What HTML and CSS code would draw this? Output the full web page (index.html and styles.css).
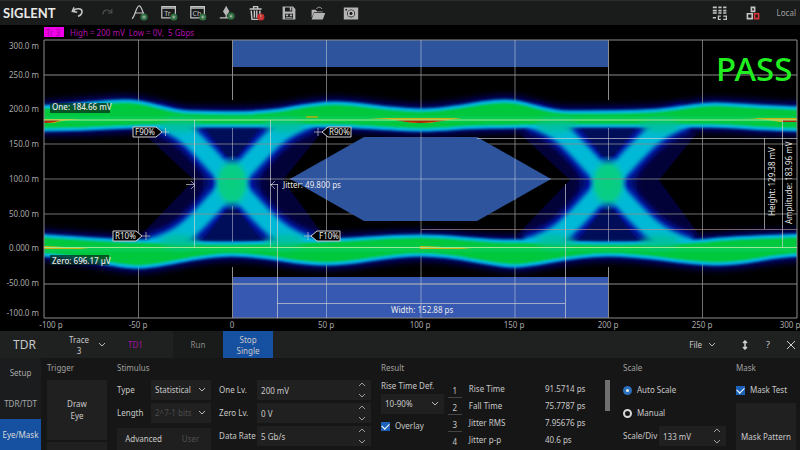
FILE: index.html
```
<!DOCTYPE html>
<html lang="en">

<head>
    <meta charset="utf-8">
    <title>SIGLENT TDR eye diagram</title>
    <link rel="stylesheet" href="styles.css">
</head>

<body>

    <header class="toolbar">
        <span class="brand">SIGLENT</span>
        <div class="tools">
            <button class="tool" aria-label="Undo">
                <svg viewBox="0 0 20 20"><path d="M5 3L3 8l6 1M4 8c3-5 11-4 11 0 0 3-2 5-5 6" stroke-width="2"/></svg>
            </button>
            <button class="tool dim" aria-label="Redo">
                <svg viewBox="0 0 20 20"><path d="M16 5v5h-5M15 9c-3-4-10-4-10 3" stroke-width="1.5"/></svg>
            </button>
            <button class="tool split" aria-label="Add marker">
                <svg viewBox="0 0 20 20"><path d="M0 17C4 15 5 1 9 1s4 13 9 14M3 10h12" stroke-width="1.5"/><circle class="plus" cx="15" cy="15" r="4.5"/><path d="M15 13v4M13 15h4" stroke-width="1"/></svg>
            </button>
            <button class="tool" aria-label="Add trace">
                <svg viewBox="0 0 20 20"><path d="M1 2h17v14H1zM1 4h17" stroke-width="1.5"/><text x="4" y="14">Tr</text><circle class="plus" cx="16" cy="15" r="4.5"/><path d="M16 13v4M14 15h4" stroke-width="1"/></svg>
            </button>
            <button class="tool" aria-label="Add channel">
                <svg viewBox="0 0 20 20"><path d="M1 2h17v14H1zM1 4h17" stroke-width="1.5"/><text x="3" y="14">Ch</text><circle class="plus" cx="16" cy="15" r="4.5"/><path d="M16 13v4M14 15h4" stroke-width="1"/></svg>
            </button>
            <button class="tool" aria-label="Add point">
                <svg viewBox="0 0 20 20"><path class="solid" d="M9 1l4 7-4 6-4-6z"/><path d="M1 16h11M9 13v3" stroke-width="1.5"/><circle class="plus" cx="15" cy="14" r="4.5"/><path d="M15 12v4M13 14h4" stroke-width="1"/></svg>
            </button>
            <button class="tool" aria-label="Delete">
                <svg viewBox="0 0 20 20"><path d="M2 5h15M7 4V2h5v2M4 7l1 11h9l1-11M8 7v9M11 7v9" stroke-width="1.8"/><circle class="alert" cx="16" cy="15" r="4.5"/><path d="M16 12v3M16 16v1" stroke-width="1"/></svg>
            </button>
            <button class="tool split" aria-label="Save">
                <svg viewBox="0 0 20 20"><path class="solid" fill-rule="evenodd" d="M2 2h13l3 3v13H2zM5 3v5h9V3zM5 11v6h10v-6zM11 3h2v4h-2zM6 12h3v2H6zM11 12h3v2h-3zM6 15h8v1H6z"/></svg>
            </button>
            <button class="tool" aria-label="Open">
                <svg viewBox="0 0 20 20"><path class="solid" d="M2 6h5l2 2h7v1H5l-3 7zM5 10h14l-3 8H2z"/><path d="M8 5c2-3 5-3 7 0" stroke-width="1"/></svg>
            </button>
            <button class="tool split" aria-label="Screenshot">
                <svg viewBox="0 0 20 20"><path class="solid" fill-rule="evenodd" d="M1 3h18v15H1zM10 5.500a5 5 0 1 0 .1 0zM3 5h2v2H3z"/><circle cx="10" cy="10.500" r="3" stroke-width="2"/></svg>
            </button>
        </div>
        <div class="status">
            <button class="tool" aria-label="Keyboard">
                <svg viewBox="0 0 20 20"><path d="M1 3h5M8 3h4M14 3h4M1 7h5M8 7h4M14 7h4M1 10h5M8 10h4M14 10h4M1 16h4" stroke-width="2"/><path d="M11 14H8v4h3M14 14h4v4h-4" stroke-width="1.500"/></svg>
            </button>
            <button class="tool" aria-label="Network">
                <svg viewBox="0 0 20 20"><path d="M8 3h4v5H8zM3 11h6v6H3z" stroke-width="2"/><path class="red" d="M12 11h5v6h-5z" stroke-width="2"/></svg>
            </button>
            <span class="local">Local</span>
        </div>
    </header>

    <main>
        <svg class="chart" viewBox="0 25 800 306" role="img" aria-label="Eye diagram">
            <defs>
                <filter id="soft" x="-20%" y="-20%" width="140%" height="140%"><feGaussianBlur stdDeviation="3"/></filter>
                <filter id="glow" x="-20%" y="-40%" width="140%" height="180%"><feGaussianBlur stdDeviation="4"/></filter>
                <filter id="edge" x="-5%" y="-20%" width="110%" height="140%"><feGaussianBlur stdDeviation="1"/></filter>
                <filter id="beam" x="-20%" y="-20%" width="140%" height="140%"><feGaussianBlur stdDeviation="2"/></filter>
                <clipPath id="plot"><path d="M44 40H797V318H44z"/></clipPath>
                <radialGradient id="core"><stop offset="0" stop-color="#08cf7c"/><stop offset=".6" stop-color="#08cc8a"/><stop offset="1" stop-color="#00bfd0" stop-opacity="0"/></radialGradient>

                <path id="one" d="M34 107C60 107 100 101 125 101S165 111 190 112S250 113 270 111S310 103 335 103S390 110 421 110S480 101 505 101S540 112 570 112S640 112 660 110S700 104 715 104S770 108 806 108V130C760 130 740 126 710 126S670 126 660 126H560C530 126 520 127 490 127S450 130 421 130S360 126 330 126H165C120 126 110 130 34 130z"/>
                <path id="zero" d="M34 235C80 238 110 241 138 241S200 243 232 243S300 241 330 240S390 236 421 236S480 241 515 241S570 243 608 243S690 242 710 240S780 236 806 235V255C770 255 750 264 717 264S650 255 608 255S540 266 515 266S460 255 421 255S360 264 326 264S270 255 232 255S165 267 138 267S80 255 34 255z"/>
                <path id="arms" d="M154 118C184 126 196 142 232 183S280 238 314 248M150 248C184 240 196 224 232 183S280 128 310 118"/>

                <g id="crossing">
                    <path fill="#030238" d="M142 132H322L283 180L324 236H140L194 180z"/>
                    <path fill="#000d62" filter="url(#soft)" d="M172 126H294C280 148 264 158 261 183S280 228 298 244H168C188 228 203 208 203 183S190 148 172 126z"/>
                    <use href="#arms" fill="none" stroke="#0018b4" stroke-width="29" filter="url(#soft)"/>
                    <use href="#arms" fill="none" stroke="#00b9d6" stroke-width="19" filter="url(#beam)"/>
                    <path fill="#000b58" filter="url(#edge)" d="M207 130H258L239 154Q232 162 225 154zM204 240H260L239 212Q232 204 225 212z"/>
                    <ellipse cx="232" cy="183" rx="20" ry="28" fill="url(#core)"/>
                </g>
            </defs>

            <rect class="badge" x="44" y="27" width="20" height="10"/>
            <text class="badge-text" x="46" y="36">Tr 3</text>
            <text class="info" x="70" y="36">High = 200 mV&#160; Low = 0V,&#160; 5 Gbps</text>

            <!-- density map of the trace -->
            <g clip-path="url(#plot)">
                <g fill="#0015a5" stroke="#0010a0" stroke-width="8" filter="url(#glow)">
                    <use href="#one"/>
                    <use href="#zero"/>
                </g>
                <use href="#crossing"/>
                <use href="#crossing" x="376"/>
                <path class="grid under" d="M44 144H797M44 179H797M44 214H797M138.500 40V318M326.500 40V318M421 40V318M515 40V318M702.500 40V318"/>
                <g fill="#06c83c" stroke="#00b8e8" stroke-width="3" filter="url(#edge)">
                    <use href="#one"/>
                    <use href="#zero"/>
                </g>
                <g fill="none" stroke="#08cf66" stroke-width="5" opacity=".6" filter="url(#edge)">
                    <path d="M44 119H797M44 249H797"/>
                </g>
                <g fill="#04c28c" opacity=".75" filter="url(#soft)">
                    <ellipse cx="180" cy="125" rx="20" ry="7"/>
                    <ellipse cx="284" cy="125" rx="20" ry="7"/>
                    <ellipse cx="180" cy="242" rx="20" ry="7"/>
                    <ellipse cx="284" cy="242" rx="20" ry="7"/>
                    <ellipse cx="556" cy="125" rx="20" ry="7"/>
                    <ellipse cx="660" cy="125" rx="20" ry="7"/>
                    <ellipse cx="556" cy="242" rx="20" ry="7"/>
                    <ellipse cx="660" cy="242" rx="20" ry="7"/>
                </g>
                <path fill="#c8b414" d="M44 119H82Q62 120 54 123H44zM368 118H462Q440 121 430 123H412Q396 119 368 118zM740 118H797V122H780Q760 118 740 118zM44 246Q70 247 90 249H44zM420 246Q450 247 472 249H420z"/>
                <path fill="#8cb420" d="M306 116H318V118H306z"/>
                <path fill="#a82808" d="M44 120H61Q54 123 44 123zM395 120H448Q430 123 420 123T395 120zM782 120H797V122H782z"/>
            </g>

            <g class="mask">
                <path d="M232 40H609V67H232z"/>
                <path d="M290 179L364 137H477L551 179L477 221H364z"/>
                <path class="low" d="M232 277H609V318H232z"/>
            </g>

            <path class="grid" d="M44 40H797V318H44zM44 75H797M44 284H797M232.500 40V100M232.500 267V318M608.500 40V100M608.500 267V318"/>
            <path class="grid over" d="M232.500 128V160M232.500 206V242M608.500 128V160M608.500 206V242M326.500 40V67M421 40V67M515 40V67M421 137V221M326.500 159V200M515 159V200M290 179H551M326.500 277V318M421 277V318M515 277V318M232 284H609"/>
            <path class="level" d="M44 120H797M44 247.500H797"/>

            <!-- measurement cursors -->
            <path class="cursor" d="M194.500 120V247M270.500 120V247M277.500 184V318M565.500 184V318M277 303.500H565M477 138.500H797M764.500 138V229M782.500 120V247M186 184.500H194M191 181l4 4-4 4M278 184.500H270M275 181l-4 4 4 4"/>
            <path class="cursor warm" d="M421 229.500H797"/>
            <path class="cursor" d="M162 132h7M165.500 128v8M142 236h8M146 232v8M314 132h8M318 128v8M304 236h8M308 232v8"/>
            <g class="flag">
                <path d="M133 127H156L162 132L156 137H133zM113 231H136L142 236L136 241H113zM351 127H328L322 132L328 137H351zM340 231H317L311 236L317 241H340z"/>
                <text x="135" y="135">F90%</text>
                <text x="115" y="239">R10%</text>
                <text x="329" y="135">R90%</text>
                <text x="319" y="239">F10%</text>
            </g>

            <rect class="tag" x="50" y="103" width="60" height="10"/>
            <rect class="tag" x="50" y="255" width="59" height="10"/>
            <g class="reading">
                <text class="strong" x="52" y="110">One: 184.66 mV</text>
                <text class="strong" x="52" y="264">Zero: 696.17 µV</text>
                <text x="283" y="188">Jitter: 49.800 ps</text>
                <text x="391" y="313">Width: 152.88 ps</text>
                <text transform="translate(775 216) rotate(-90)">Height: 129.38 mV</text>
                <text transform="translate(792 224) rotate(-90)">Amplitude: 183.96 mV</text>
            </g>
            <text class="pass" x="716" y="81">PASS</text>

            <g class="axis end">
                <text x="39" y="49">300.0 m</text>
                <text x="39" y="78">250.0 m</text>
                <text x="39" y="112">200.0 m</text>
                <text x="39" y="147">150.0 m</text>
                <text x="39" y="182">100.0 m</text>
                <text x="39" y="217">50.00 m</text>
                <text x="39" y="251">0.000 m</text>
                <text x="39" y="286">-50.00 m</text>
                <text x="39" y="316">-100.0 m</text>
            </g>
            <g class="axis middle">
                <text x="51" y="328">-100 p</text>
                <text x="138" y="328">-50 p</text>
                <text x="232" y="328">0</text>
                <text x="326" y="328">50 p</text>
                <text x="420" y="328">100 p</text>
                <text x="514" y="328">150 p</text>
                <text x="608" y="328">200 p</text>
                <text x="702" y="328">250 p</text>
                <text x="790" y="328">300 p</text>
            </g>
        </svg>
    </main>

    <section class="panel">
        <div class="panel-bar">
            <h1 class="panel-title">TDR</h1>
            <button class="trace">
                <span>Trace<br>3</span>
                <svg class="chev" viewBox="0 0 8 8"><path d="M1 2l3 3 3-3"/></svg>
            </button>
            <span class="source">TD1</span>
            <button class="run">Run</button>
            <button class="stop">Stop<br>Single</button>
            <div class="panel-actions">
                <button class="file">File <svg class="chev" viewBox="0 0 8 8"><path d="M1 2l3 3 3-3"/></svg></button>
                <button aria-label="Resize"><svg class="act" viewBox="0 0 10 10"><path d="M5 1v8M3 3l2-2 2 2M3 7l2 2 2-2" stroke-width="1.500"/></svg></button>
                <button class="help">?</button>
                <button aria-label="Close"><svg class="act" viewBox="0 0 10 10"><path d="M1 1l8 8M9 1L1 9"/></svg></button>
            </div>
        </div>

        <div class="panel-body">
            <nav class="side">
                <a href="#setup">Setup</a>
                <a href="#tdr">TDR/TDT</a>
                <a class="active" href="#eye">Eye/Mask</a>
            </nav>

            <div class="group trigger">
                <h2>Trigger</h2>
                <button class="big">Draw<br>Eye</button>
                <button class="next" aria-label="More"></button>
            </div>

            <div class="group">
                <h2>Stimulus</h2>
                <div class="stimulus">
                    <label for="type">Type</label>
                    <span class="field">
                        <select id="type"><option>Statistical</option></select>
                        <svg class="chev" viewBox="0 0 8 8"><path d="M1 2l3 3 3-3"/></svg>
                    </span>
                    <label class="second" for="one-lv">One Lv.</label>
                    <span class="field">
                        <input id="one-lv" type="text" value="200 mV">
                        <svg class="spin" viewBox="0 0 8 18"><path d="M1 5l3-3 3 3M1 13l3 3 3-3"/></svg>
                    </span>
                    <label for="length">Length</label>
                    <span class="field">
                        <select id="length" disabled><option>2^7-1 bits</option></select>
                        <svg class="chev" viewBox="0 0 8 8"><path d="M1 2l3 3 3-3"/></svg>
                    </span>
                    <label class="second" for="zero-lv">Zero Lv.</label>
                    <span class="field">
                        <input id="zero-lv" type="text" value="0 V">
                        <svg class="spin" viewBox="0 0 8 18"><path d="M1 5l3-3 3 3M1 13l3 3 3-3"/></svg>
                    </span>
                    <div class="modes">
                        <button>Advanced</button>
                        <button disabled>User</button>
                    </div>
                    <label class="second" for="rate">Data Rate</label>
                    <span class="field">
                        <input id="rate" type="text" value="5 Gb/s">
                        <svg class="spin" viewBox="0 0 8 18"><path d="M1 5l3-3 3 3M1 13l3 3 3-3"/></svg>
                    </span>
                </div>
            </div>

            <div class="group">
                <h2>Result</h2>
                <div class="result">
                    <div class="options">
                        <label for="rise">Rise Time Def.</label>
                        <span class="field">
                            <select id="rise"><option>10-90%</option></select>
                            <svg class="chev" viewBox="0 0 8 8"><path d="M1 2l3 3 3-3"/></svg>
                        </span>
                        <label class="check"><input type="checkbox" checked>Overlay</label>
                    </div>
                    <table>
                        <tr><th>1</th><td>Rise Time</td><td>91.5714 ps</td></tr>
                        <tr><th>2</th><td>Fall Time</td><td>75.7787 ps</td></tr>
                        <tr><th>3</th><td>Jitter RMS</td><td>7.95676 ps</td></tr>
                        <tr><th>4</th><td>Jitter p-p</td><td>40.6 ps</td></tr>
                    </table>
                    <div class="scroll"></div>
                </div>
            </div>

            <div class="group">
                <h2>Scale</h2>
                <div class="scale">
                    <label class="check"><input type="radio" name="scale" checked>Auto Scale</label>
                    <label class="check"><input type="radio" name="scale">Manual</label>
                    <div class="div-row">
                        <label for="div">Scale/Div</label>
                        <span class="field">
                            <input id="div" type="text" value="133 mV">
                            <svg class="spin" viewBox="0 0 8 18"><path d="M1 5l3-3 3 3M1 13l3 3 3-3"/></svg>
                        </span>
                    </div>
                </div>
            </div>

            <div class="group">
                <h2>Mask</h2>
                <label class="check"><input type="checkbox" checked>Mask Test</label>
                <button class="pattern">Mask Pattern</button>
            </div>
        </div>
    </section>

</body>

</html>
```
FILE: styles.css
```
* {
    margin: 0;
    padding: 0;
    box-sizing: border-box;
}

body {
    display: flex;
    flex-direction: column;
    height: 100vh;
    overflow: hidden;
    background: #000;
    color: #c8c8c8;
    font: 9px/12px "Noto Sans", sans-serif;
}

button,
input,
select {
    border: none;
    background: none;
    color: inherit;
    font: inherit;
}

button {
    cursor: pointer;
}

svg {
    display: block;
}

/* toolbar */

.toolbar {
    display: flex;
    align-items: center;
    flex: none;
    height: 25px;
    padding: 0 4px 0 3px;
    background: #1a1b1b;
    border-top: 1px solid #2c2c2c;
}

.brand {
    width: 66px;
    color: #e8e8e8;
    font: bold 13px/24px Lato, sans-serif;
}

.tools,
.status {
    display: flex;
    align-items: center;
    gap: 11px;
}

.tool svg {
    width: 18px;
    height: 18px;
    padding: 1px;
    fill: none;
    stroke: #c4c4c4;
    overflow: visible;
}

.tool text {
    fill: #c4c4c4;
    stroke: none;
    font-size: 9px;
}

.tool .solid {
    fill: #b4b4b4;
    stroke: none;
}

.tool .plus {
    fill: #2f7040;
    stroke: none;
}

.tool .alert {
    fill: #c8302c;
    stroke: none;
}

.tool .red {
    stroke: #d83838;
}

.split {
    margin-left: 4px;
}

.dim {
    opacity: 0.3;
}

.status {
    margin-left: auto;
    gap: 15px;
}

.local {
    color: #a0a0a0;
    font-size: 8px;
}

/* chart */

.chart {
    width: 100%;
    height: auto;
}

.badge {
    fill: #f000e8;
}

.badge-text {
    fill: #a000a0;
    font-size: 8px;
}

.info {
    fill: #b010ac;
    font-size: 8px;
}

.grid {
    fill: none;
    stroke: #8c8c8c;
}

.under {
    opacity: 0.8;
}

.over {
    stroke: #d0d8e0;
    opacity: 0.5;
}

.mask {
    fill: #2f549e;
}

.mask .low {
    fill: #3759b2;
}

.level {
    stroke: #a0e890;
}

.cursor {
    fill: none;
    stroke: #d8d8d8;
    opacity: 0.65;
}

.warm {
    stroke: #b89090;
}

.flag path {
    fill: #000;
    stroke: #d0d0d0;
}

.flag text,
.reading text {
    fill: #e8e8e8;
    font-size: 8px;
}

.reading .strong {
    font-weight: 500;
}

.tag {
    fill: #06301c;
    opacity: 0.75;
}

.pass {
    fill: #20f020;
    font-size: 33px;
    font-weight: 500;
}

.axis text {
    fill: #a8a8a8;
    font-size: 8px;
}

.end {
    text-anchor: end;
}

.middle {
    text-anchor: middle;
}

/* settings panel */

.panel {
    display: flex;
    flex: 1;
    flex-direction: column;
    min-height: 0;
    overflow: hidden;
    background: #161616;
}

.panel-bar {
    display: flex;
    flex: none;
    height: 27px;
    background: #1f2121;
}

.panel-title {
    width: 58px;
    padding-left: 13px;
    font-size: 12px;
    font-weight: normal;
    line-height: 27px;
}

.trace {
    display: flex;
    align-items: center;
    gap: 9px;
    padding-left: 11px;
    font-size: 8px;
    line-height: 11px;
}

.chev {
    flex: none;
    width: 8px;
    height: 8px;
    fill: none;
    stroke: #b8b8b8;
}

.source {
    width: 67px;
    padding-left: 22px;
    color: #a010a0;
    font-size: 8px;
    line-height: 27px;
}

.run {
    width: 50px;
    background: #191a1a;
    color: #888;
    font-size: 8px;
}

.stop {
    width: 50px;
    background: #1650a0;
    font-size: 8px;
    line-height: 11px;
}

.panel-actions {
    display: flex;
    align-items: center;
    gap: 16px;
    margin-left: auto;
    padding-right: 4px;
}

.file {
    display: flex;
    align-items: center;
    gap: 6px;
    padding-right: 8px;
    font-size: 8px;
}

.act {
    width: 10px;
    height: 10px;
    fill: none;
    stroke: #d0d0d0;
}

.panel-body {
    display: grid;
    grid-template-columns: 41px 70fr 264fr 242fr 113fr 70fr;
    grid-template-rows: minmax(0, 1fr);
    flex: 1;
    min-height: 0;
}

.side {
    display: grid;
    grid-template-rows: repeat(3, 1fr);
    background: #1b1c1e;
}

.side a {
    display: flex;
    align-items: center;
    justify-content: center;
    color: #a8a8a8;
    font-size: 8px;
    text-decoration: none;
}

.side .active {
    background: #1650a0;
    color: #d8d8d8;
}

.group {
    display: flex;
    flex-direction: column;
    min-width: 0;
    padding: 4px 4px 0 6px;
}

.group h2 {
    flex: none;
    height: 18px;
    color: #a0a0a0;
    font-size: 8px;
    font-weight: normal;
}

.big {
    height: 60px;
    background: #202020;
    font-size: 8px;
    line-height: 12px;
}

.next {
    flex: 1;
    margin-top: 2px;
    background: #202020;
}

.field {
    display: flex;
    align-items: center;
    min-width: 0;
    height: 20px;
    padding-right: 5px;
    background: #202020;
}

.field input,
.field select {
    flex: 1;
    width: 0;
    height: 100%;
    padding-left: 4px;
    appearance: none;
    font-size: 8px;
}

.field select:disabled {
    color: #4c4c4c;
    opacity: 1;
}

.spin {
    width: 8px;
    height: 18px;
    fill: none;
    stroke: #a0a0a0;
}

label {
    font-size: 8px;
    white-space: nowrap;
}

.stimulus {
    display: grid;
    grid-template-columns: 34px 58fr 46px 110fr;
    grid-auto-rows: 20px;
    align-items: center;
    row-gap: 3px;
}

.stimulus .second {
    padding-left: 8px;
}

.modes {
    display: grid;
    grid-template-columns: 52fr 40fr;
    grid-column: span 2;
    align-self: start;
    height: 22px;
    margin-top: 2px;
    background: #1f1f1f;
}

.modes button {
    font-size: 8px;
}

.modes button:disabled {
    color: #505050;
}

.result {
    display: grid;
    grid-template-columns: 64fr 156fr 5px;
    align-items: start;
    column-gap: 4px;
    padding-right: 3px;
}

.options {
    display: grid;
    row-gap: 2px;
}

.check {
    display: flex;
    align-items: center;
    flex: none;
    gap: 5px;
    height: 20px;
}

.check input {
    width: 9px;
    height: 9px;
    appearance: none;
}

.check input[type="checkbox"] {
    background: #1c62b8;
}

.check input[type="checkbox"]::before {
    content: "";
    display: block;
    width: 4px;
    height: 6px;
    margin: 0 auto;
    border: solid #fff;
    border-width: 0 1px 1px 0;
    transform: rotate(45deg);
}

.check input[type="radio"] {
    border: 2px solid #d8d8d8;
    border-radius: 50%;
}

.check input[type="radio"]:checked {
    border: 3px solid #2c70c0;
    background: #f0f0d8;
}

table {
    width: 100%;
    border-collapse: collapse;
    font-size: 8px;
    line-height: 11px;
}

th {
    width: 14px;
    padding-top: 4px;
    border-bottom: 1px solid #444;
    font-weight: normal;
}

tr:last-child th {
    border-bottom: none;
}

td {
    height: 17px;
    padding-left: 7px;
}

td:last-child {
    width: 56px;
    padding-left: 0;
}

.scroll {
    height: 31px;
    background: #707070;
}

.scale {
    display: grid;
    row-gap: 3px;
}

.div-row {
    display: grid;
    grid-template-columns: 36px 1fr;
    align-items: center;
}

.pattern {
    flex: 1;
    margin-top: 3px;
    padding-top: 20px;
    background: #202020;
    font-size: 8px;
    white-space: nowrap;
}
```
